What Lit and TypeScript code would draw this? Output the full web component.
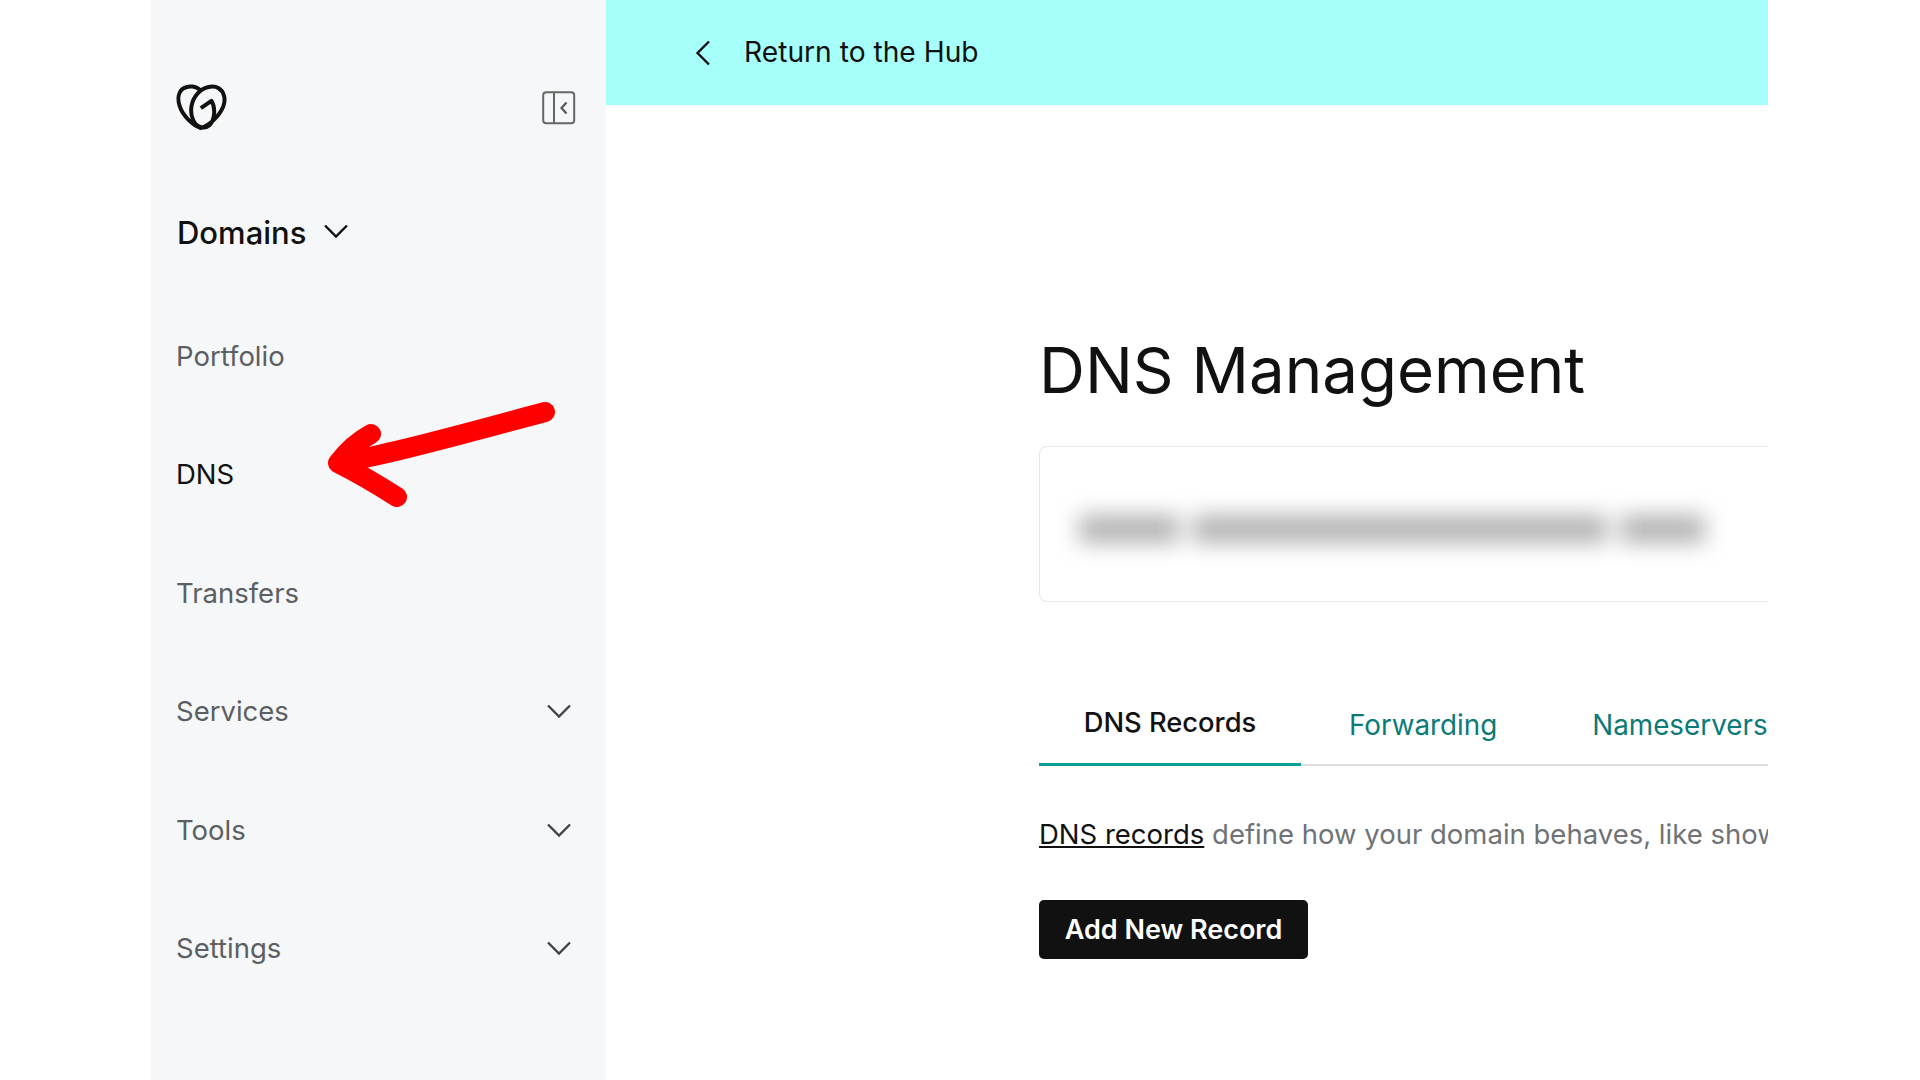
import { LitElement, html, css } from "lit";
import { customElement } from "lit/decorators.js";

const chevron = html`<svg class="chev" viewBox="0 0 26 16" width="26" height="16"><path d="M2 2.500 13 13.500 24 2.500" fill="none" stroke="#444" stroke-width="2.400"/></svg>`;

@customElement("app-root")
export class AppRoot extends LitElement {
  static styles = css`
    :host { display: block; width: 1920px; height: 1080px; overflow: hidden; background: #fff; font-family: Inter, "Liberation Sans", sans-serif; color: #111; }
    .page { display: flex; height: 1080px; padding-left: 151px; width: 1768px; box-sizing: border-box; }
    .side { width: 455px; flex: none; background: #f5f7f8; box-sizing: border-box; padding: 83px 34px 0 26px; position: relative; }
    .logoRow { display: flex; justify-content: space-between; align-items: center; height: 48px; margin-left: -2px; }
    .panel { display: block; margin-right: -4px; margin-top: 2px; }
    .domains { display: flex; align-items: center; gap: 17px; height: 50px; margin-top: 76px; margin-bottom: 39.500px; font-size: 31px; font-weight: 500; color: #111; }
    .domains .chev { margin-top: -2px; }
    .domains .chev path { stroke: #111; }
    .nav { display: flex; align-items: center; justify-content: space-between; height: 118.500px; margin-left: -1px; font-size: 27.500px; color: #5c5f62; }
    .nav.on { color: #111; }
    .arrow { position: absolute; left: 0; top: 0; pointer-events: none; }
    .main { flex: 1; min-width: 0; overflow: hidden; }
    .banner { height: 105px; background: #a6fffa; display: flex; align-items: center; gap: 33px; padding-left: 89px; font-size: 28.200px; color: #111; }
    .banner span { margin-top: -2px; }
    .content { padding-left: 433px; }
    h1 { margin: 0; padding-top: 220px; font-size: 63.600px; line-height: 90px; font-weight: 400; color: #111; white-space: nowrap; }
    .card { margin-top: 31px; width: 900px; height: 156px; box-sizing: border-box; border: 1.500px solid #e4e8eb; border-radius: 8px; display: flex; align-items: center; padding-left: 39px; }
    .blurred { display: flex; gap: 14px; filter: blur(11px); margin-top: 10px; }
    .blurred div { height: 28px; background: #b2b2b2; }
    .tabs { margin-top: 74px; display: flex; width: 900px; height: 90px; border-bottom: 2px solid #dcdcdc; box-sizing: border-box; font-size: 27.800px; line-height: 36px; color: #0b7a78; white-space: nowrap; }
    .tab { padding: 31px 47px 0 48px; box-sizing: border-box; }
    .tab.on { color: #111; font-size: 27.300px; font-weight: 500; width: 262px; padding: 29px 0 0; text-align: center; border-bottom: 3px solid #09a09b; height: 90px; }
    .desc { margin-top: 48px; font-size: 27.500px; line-height: 40px; color: #6f7276; white-space: nowrap; }
    .desc a { color: #111; text-decoration: underline; }
    .btn { display: inline-flex; align-items: center; margin-top: 45.500px; height: 59px; width: 269px; box-sizing: border-box; justify-content: center; padding-top: 2px; background: #111; color: #fff; border: 0; border-radius: 5px; font: 600 27px Inter, "Liberation Sans", sans-serif; }
  `;

  render() {
    return html`<div class="page">
      <aside class="side">
        <div class="logoRow">
          <svg width="53" height="48" viewBox="30 40 160 145">
            <path d="M106 62C95 50 72 46 56 56 40 66 37 88 44 110 54 140 84 168 108 176 134 168 164 140 176 110 184 88 178 66 162 56 146 46 118 50 98 72 78 94 74 126 84 150 92 172 118 182 134 168 152 150 152 112 140 94L108 116" fill="none" stroke="#111" stroke-width="12" stroke-linejoin="round"/>
          </svg>
          <svg class="panel" width="34" height="34" viewBox="0 0 34 34"><rect x="1.200" y="1.200" width="31" height="31" rx="3" fill="none" stroke="#666" stroke-width="2"/><path d="M12 1v32" stroke="#666" stroke-width="2"/><path d="M24.500 11.500 19.500 17l5 5.500" fill="none" stroke="#555" stroke-width="2.200"/></svg>
        </div>
        <div class="domains"><span>Domains</span>${chevron}</div>
        <div class="nav">Portfolio</div>
        <div class="nav on">DNS</div>
        <div class="nav">Transfers</div>
        <div class="nav">Services${chevron}</div>
        <div class="nav">Tools${chevron}</div>
        <div class="nav">Settings${chevron}</div>
        <svg class="arrow" width="455" height="1080" viewBox="151 0 455 1080">
          <path d="M545 412C500 424 450 438 400 450 378 455 358 460 340 463" fill="none" stroke="#f00" stroke-width="20" stroke-linecap="round"/>
          <path d="M371 434C358 441 347 451 338 463 356 472 375 483 397 497" fill="none" stroke="#f00" stroke-width="20" stroke-linecap="round" stroke-linejoin="round"/>
        </svg>
      </aside>
      <main class="main">
        <div class="banner"><svg width="16" height="26" viewBox="0 0 16 26"><path d="M14 1.500 2.500 13 14 24.500" fill="none" stroke="#111" stroke-width="2.400"/></svg><span>Return to the Hub</span></div>
        <div class="content">
          <h1>DNS Management</h1>
          <div class="card"><div class="blurred">
            <div style="width:100px"></div><div style="width:414px"></div><div style="width:84px"></div>
          </div></div>
          <div class="tabs">
            <div class="tab on">DNS Records</div>
            <div class="tab">Forwarding</div>
            <div class="tab">Nameservers</div>
          </div>
          <div class="desc"><a>DNS records</a> define how your domain behaves, like showing your website</div>
          <button class="btn">Add New Record</button>
        </div>
      </main>
    </div>`;
  }
}
